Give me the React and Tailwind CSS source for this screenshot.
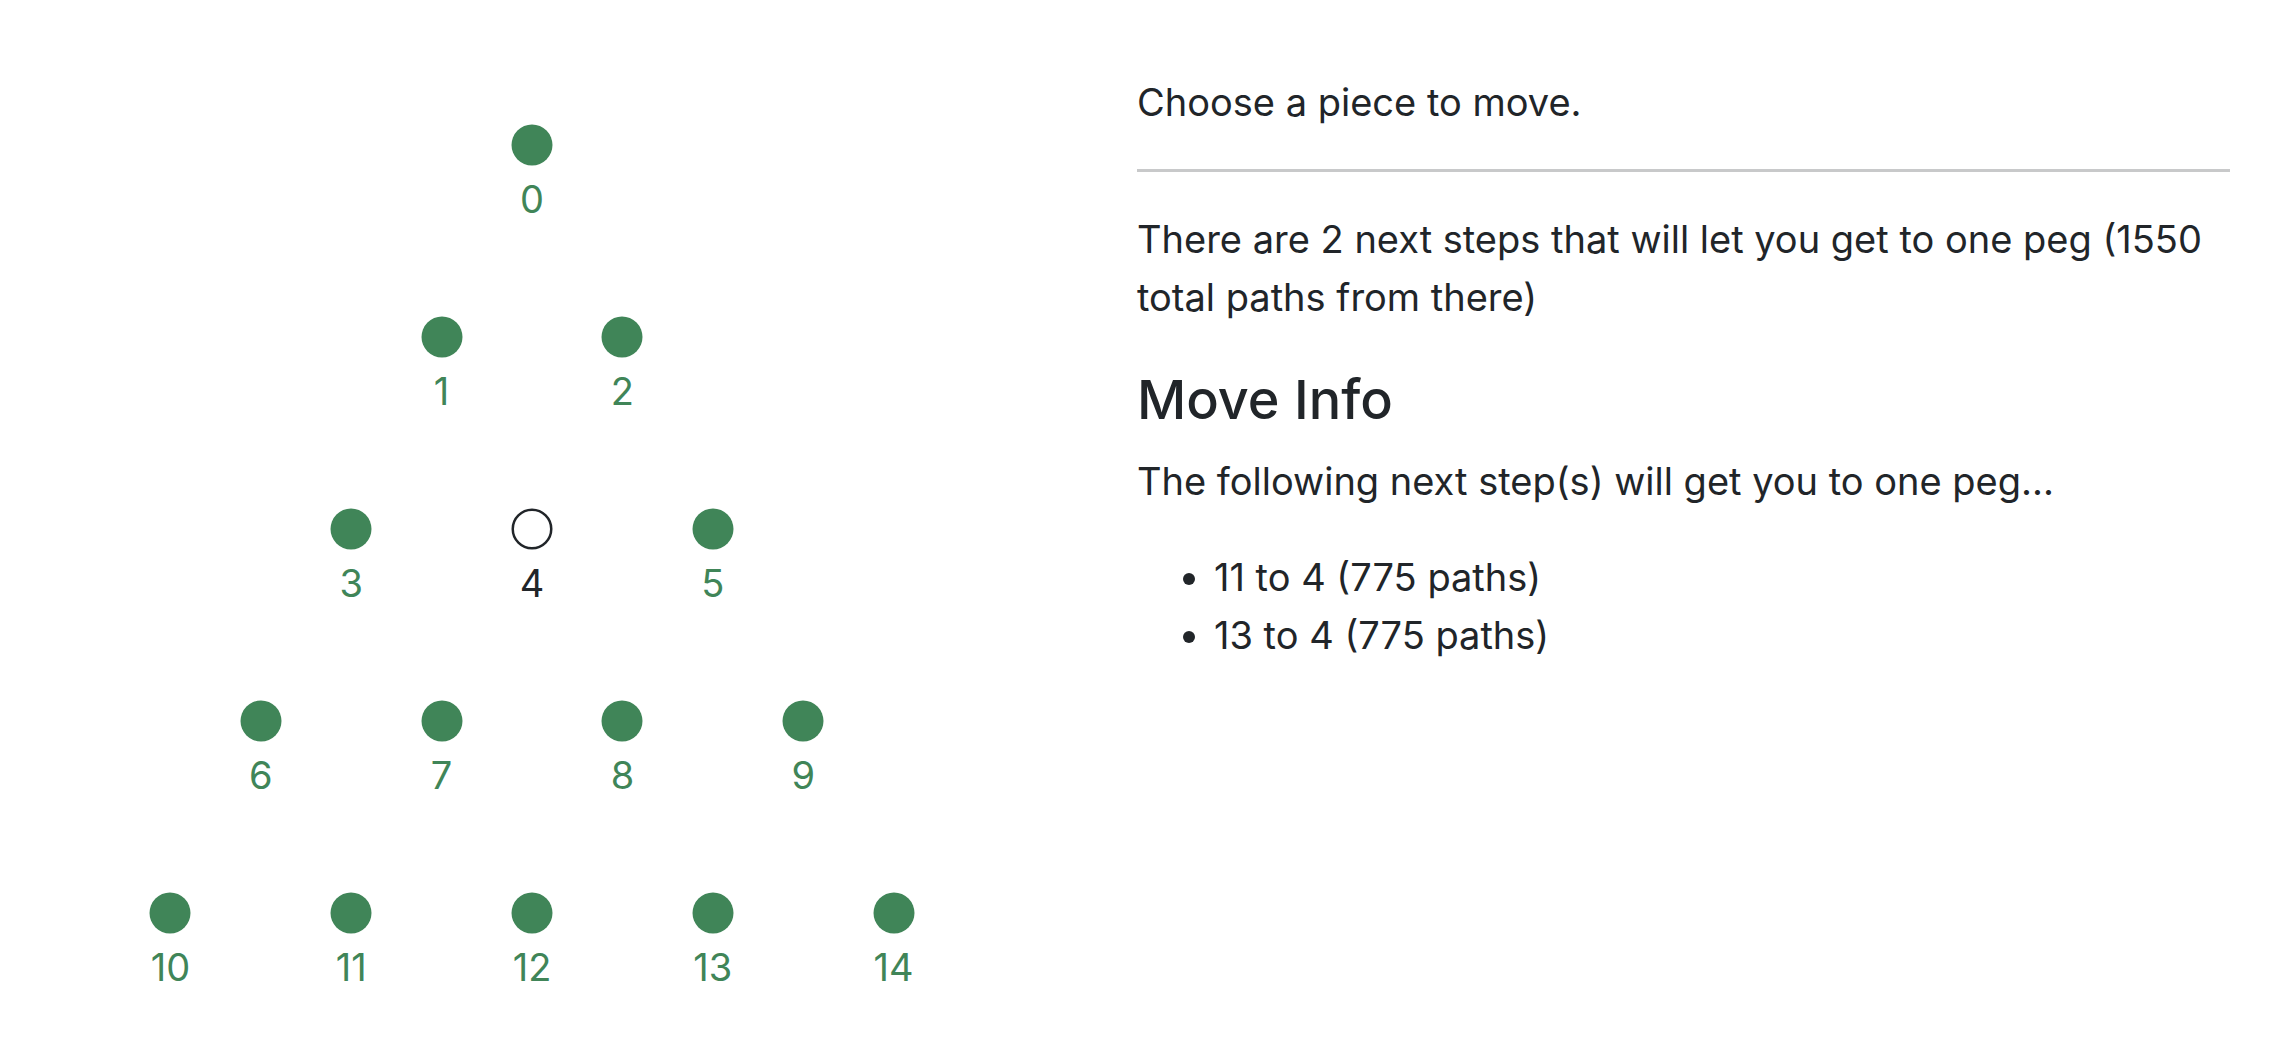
const rows = [[0], [1, 2], [3, 4, 5], [6, 7, 8, 9], [10, 11, 12, 13, 14]];
const EMPTY_HOLE = 4;

function Peg({ id }) {
  const empty = id === EMPTY_HOLE;
  return (
    <button
      type="button"
      className={`flex w-1/5 flex-col items-center gap-1 ${empty ? "text-[#212529]" : "text-[#408558]"}`}
    >
      <svg viewBox="0 0 42 42" className="size-[42px] shrink-0" aria-hidden="true">
        {empty ? (
          <circle cx="21" cy="21" r="19.25" fill="none" stroke="currentColor" strokeWidth="2.5" />
        ) : (
          <circle cx="21" cy="21" r="20.5" fill="currentColor" />
        )}
      </svg>
      <span>{id}</span>
    </button>
  );
}

function Board() {
  return (
    <section aria-label="Peg board" className="flex flex-col gap-[88px] px-20 pt-[124px]">
      {rows.map((row) => (
        <div key={row[0]} className="flex justify-center">
          {row.map((id) => (
            <Peg key={id} id={id} />
          ))}
        </div>
      ))}
    </section>
  );
}

export default function App() {
  return (
    <main className="grid min-h-screen grid-cols-[1064fr_1222fr] bg-white font-['Inter',sans-serif] text-[38px] leading-[58px] text-[#212529]">
      <Board />
      <section className="pt-[73px] pr-14 pl-[73px]">
        <p>Choose a piece to move.</p>
        <hr className="my-[38px] border-t-[3px] border-[#c8c9ca]" />
        <p>There are 2 next steps that will let you get to one peg (1550 total paths from there)</p>
        <h2 className="mt-[38px] mb-4 text-[54px] leading-[72px] font-medium">Move Info</h2>
        <p>The following next step(s) will get you to one peg...</p>
        <ul className="mt-[38px] list-disc pl-[77px]">
          <li>11 to 4 (775 paths)</li>
          <li>13 to 4 (775 paths)</li>
        </ul>
      </section>
    </main>
  );
}
